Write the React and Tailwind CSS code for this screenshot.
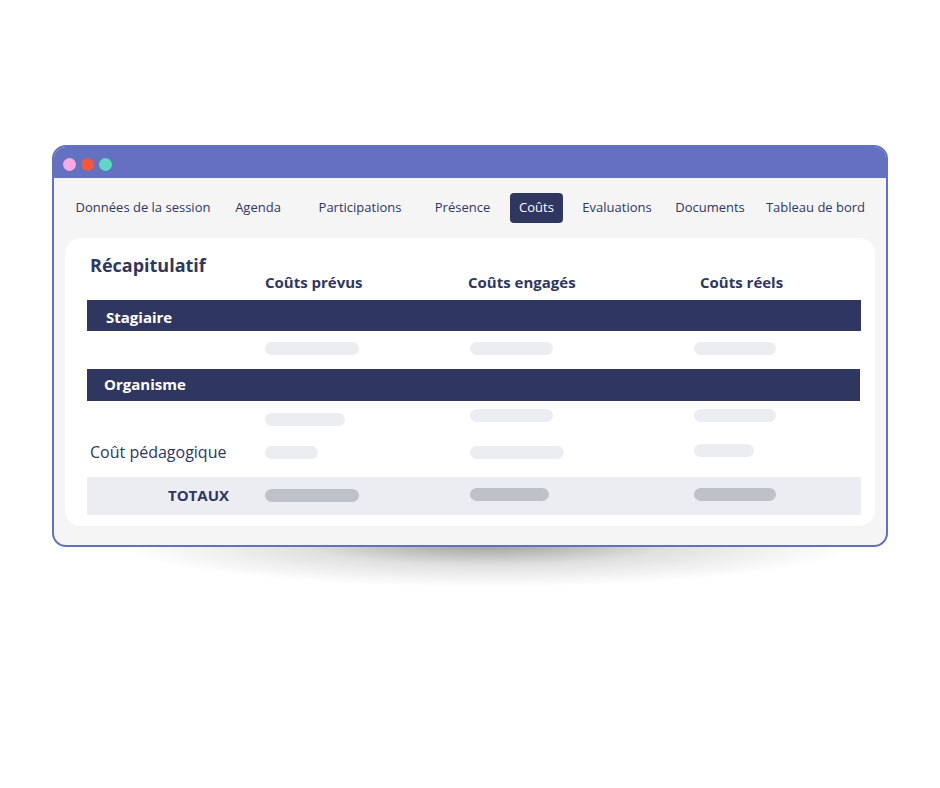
import React from "react";

const tabs = [
  { label: "Données de la session", w: "w-[136px]" },
  { label: "Agenda", w: "w-[94px]" },
  { label: "Participations", w: "w-[110px]" },
  { label: "Présence", w: "w-[95px]" },
  { label: "Coûts", w: "w-[53px]", active: true },
  { label: "Evaluations", w: "w-[108px]" },
  { label: "Documents", w: "w-[78px]" },
  { label: "Tableau de bord", w: "w-[133px]" },
];

const cols = "grid grid-cols-[178px_205px_224px_1fr]";

const Bar = ({ w, mt, dark }) => (
  <div
    className={`${w} ${mt} h-[13px] rounded-full ${dark ? "bg-[#bfc1c8]" : "bg-[#ecedf2]"}`}
  />
);

const App = () => {
  return (
    <div
      className="w-[940px] h-[788px] bg-white pt-[145px] pl-[52px]"
      style={{ fontFamily: '"Open Sans", "Noto Sans", sans-serif' }}
    >
      <div className="relative w-[836px]">
        {/* soft shadow under the window */}
        <div className="absolute left-[50px] top-[398px] w-[740px] h-[44px] bg-[radial-gradient(ellipse_50%_100%_at_52%_0%,rgba(0,0,0,0.4),rgba(0,0,0,0.12)_50%,transparent_100%)]" />

        <div className="relative w-[836px] h-[402px] rounded-[14px] border-2 border-[#6470c0] bg-[#f5f5f5] overflow-hidden">
          {/* title bar */}
          <div className="h-[31px] bg-[#6470c0] flex items-center gap-[5px] pl-[9px] pt-[3px]">
            <span className="w-[13px] h-[13px] rounded-full bg-[#f7a9e3]" />
            <span className="w-[13px] h-[13px] rounded-full bg-[#f3583a]" />
            <span className="w-[13px] h-[13px] rounded-full bg-[#5ed8c2]" />
          </div>

          {/* tabs */}
          <div className="flex items-start pl-[21px] pt-[15px] h-[60px] text-[13px] text-[#2f3761]">
            {tabs.map((t) => (
              <div
                key={t.label}
                className={`${t.w} h-[30px] flex items-center justify-center whitespace-nowrap ${
                  t.active ? "bg-[#2f3761] text-white rounded-[4px]" : ""
                }`}
              >
                {t.label}
              </div>
            ))}
          </div>

          {/* card */}
          <div className="mx-[11px] h-[288px] bg-white rounded-[16px] pt-[16px] pl-[22px] pr-[14px] text-[#2f3761]">
            <div className={`${cols} h-[38px] mb-[8px] font-bold`}>
              <div className="text-[18px] leading-[22px] pl-[3px]">Récapitulatif</div>
              <div className="text-[15px] leading-[20px] pt-[18px]">Coûts prévus</div>
              <div className="text-[15px] leading-[20px] pt-[18px] -ml-[2px]">Coûts engagés</div>
              <div className="text-[15px] leading-[20px] pt-[18px] pl-[6px]">Coûts réels</div>
            </div>

            <div className="h-[31px] bg-[#2f3761] text-white font-bold text-[15px] leading-[18px] pt-[8px] pl-[19px]">
              Stagiaire
            </div>

            <div className={`${cols} h-[38px] items-start`}>
              <div />
              <Bar w="w-[94px]" mt="mt-[11px]" />
              <Bar w="w-[83px]" mt="mt-[11px]" />
              <Bar w="w-[82px]" mt="mt-[11px]" />
            </div>

            <div className="h-[32px] mr-[1px] bg-[#2f3761] text-white font-bold text-[15px] leading-[18px] pt-[6px] pl-[17px]">
              Organisme
            </div>

            <div className={`${cols} h-[35px] items-start`}>
              <div />
              <Bar w="w-[80px]" mt="mt-[12px]" />
              <Bar w="w-[83px]" mt="mt-[8px]" />
              <Bar w="w-[82px]" mt="mt-[8px]" />
            </div>

            <div className={`${cols} h-[41px] items-start`}>
              <div className="text-[16px] leading-[20px] pt-[6px] pl-[3px] whitespace-nowrap">Coût pédagogique</div>
              <Bar w="w-[53px]" mt="mt-[10px]" />
              <Bar w="w-[94px]" mt="mt-[10px]" />
              <Bar w="w-[60px]" mt="mt-[8px]" />
            </div>

            <div className={`${cols} h-[38px] items-start bg-[#ecedf2]`}>
              <div className="text-[15px] font-bold leading-[18px] pt-[9px] text-right pr-[36px]">TOTAUX</div>
              <Bar w="w-[94px]" mt="mt-[12px]" dark />
              <Bar w="w-[79px]" mt="mt-[11px]" dark />
              <Bar w="w-[82px]" mt="mt-[11px]" dark />
            </div>
          </div>
        </div>
      </div>
    </div>
  );
};

export default App;
